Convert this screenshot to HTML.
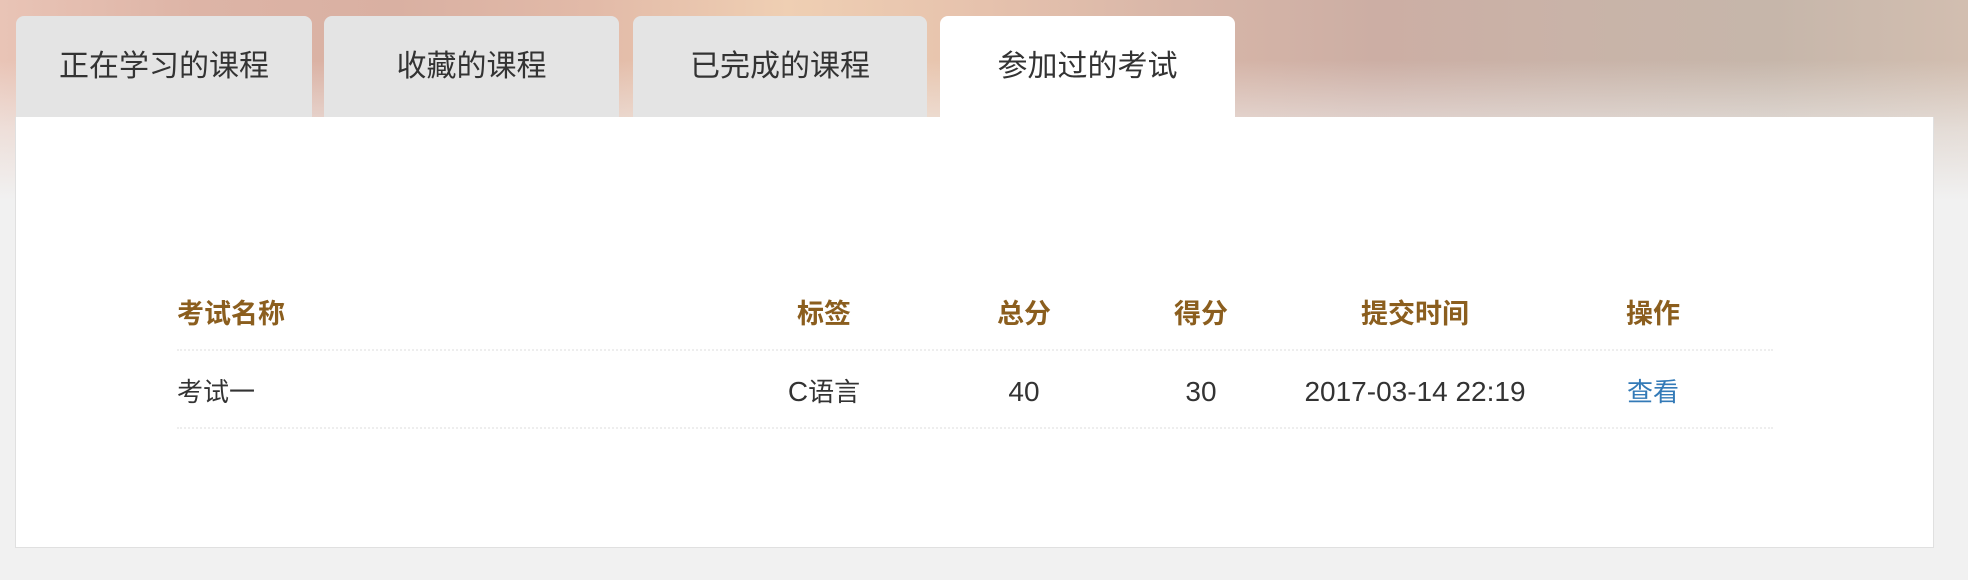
<!DOCTYPE html>
<html><head><meta charset="utf-8"><style>
*{margin:0;padding:0;box-sizing:border-box}
html,body{width:1968px;height:580px;overflow:hidden}
body{position:relative;font-family:"Liberation Sans","Noto Sans CJK SC",sans-serif;
background:
linear-gradient(to bottom, rgba(241,241,241,0) 0px, rgba(241,241,241,0) 60px, rgba(241,241,241,0.6) 130px, #f1f1f1 200px),
linear-gradient(to right,#e9c4b6 0%,#ddb4a6 10%,#d9b0a2 20%,#e2baa8 30%,#efcfb3 40%,#e6c2ad 50%,#d8b6a8 60%,#ccaea4 70%,#c9b3a8 80%,#c6b6aa 90%,#d2beb0 100%);}
.tab{position:absolute;top:16px;height:101px;background:#e4e4e4;border-radius:8px 8px 0 0;
font-size:30px;color:#333;text-align:center;line-height:101px}
.tab.on{background:#fff;height:103px}
.panel{position:absolute;left:15px;top:117px;width:1919px;height:431px;background:#fff;border:1px solid #e0e0e0;border-top:none}
.cell{position:absolute;font-size:26px;transform:translateX(-50%);white-space:nowrap;height:36px;line-height:36px}
.h{color:#8b5e1e;font-weight:bold;top:179px;font-size:27px}
.r{color:#333;top:257px}
.n{font-size:28px}
.line{position:absolute;left:161px;width:1596px;border-top:2px dotted #eeeeee}
</style></head><body>
<div class="tab" style="left:16px;width:296px">正在学习的课程</div>
<div class="tab" style="left:324px;width:295px">收藏的课程</div>
<div class="tab" style="left:633px;width:294px">已完成的课程</div>
<div class="panel">
<div class="cell h" style="left:161px;transform:none">考试名称</div>
<div class="cell h" style="left:808px">标签</div>
<div class="cell h" style="left:1008px">总分</div>
<div class="cell h" style="left:1185px">得分</div>
<div class="cell h" style="left:1399px">提交时间</div>
<div class="cell h" style="left:1637px">操作</div>
<div class="line" style="top:232px"></div>
<div class="cell r" style="left:161px;transform:none">考试一</div>
<div class="cell r" style="left:808px"><span class="n">C</span>语言</div>
<div class="cell r n" style="left:1008px">40</div>
<div class="cell r n" style="left:1185px">30</div>
<div class="cell r n" style="left:1399px">2017-03-14 22:19</div>
<div class="cell r" style="left:1637px;color:#337ab7">查看</div>
<div class="line" style="top:310px"></div>
</div>
<div class="tab on" style="left:940px;width:295px">参加过的考试</div>
</body></html>
